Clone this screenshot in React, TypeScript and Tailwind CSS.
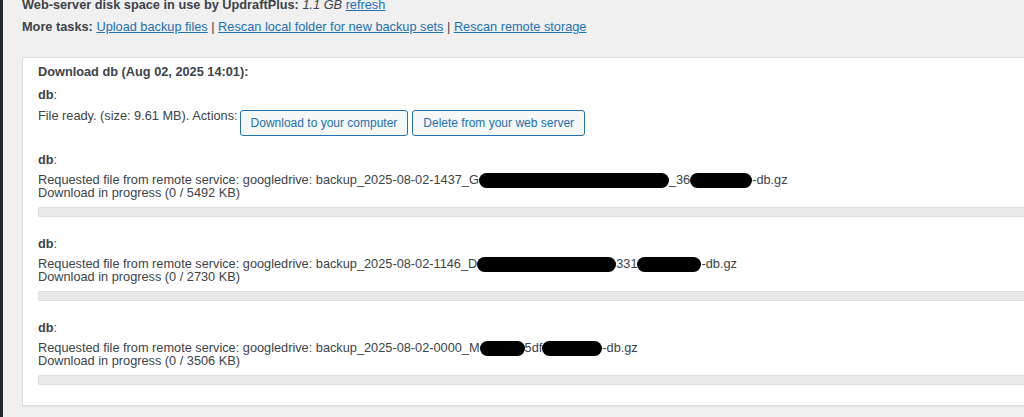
import React from 'react';

// --- Types ---
type Piece = { text?: string; blob?: number };

type RemoteItem = {
    pieces: Piece[];
    size: string;
};

// --- Data ---
const remoteItems: RemoteItem[] = [
    {
        pieces: [
            { text: 'backup_2025-08-02-1437_G' },
            { blob: 190 },
            { text: '_36' },
            { blob: 62 },
            { text: '-db.gz' },
        ],
        size: '5492',
    },
    {
        pieces: [
            { text: 'backup_2025-08-02-1146_D' },
            { blob: 139 },
            { text: '331' },
            { blob: 64 },
            { text: '-db.gz' },
        ],
        size: '2730',
    },
    {
        pieces: [
            { text: 'backup_2025-08-02-0000_M' },
            { blob: 45 },
            { text: '5df' },
            { blob: 60 },
            { text: '-db.gz' },
        ],
        size: '3506',
    },
];

// --- Redaction scribble (negative margins keep it from growing the line box) ---
const Blob: React.FC<{ width: number }> = ({ width }) => (
    <span
        className="inline-block h-[15px] -my-[4px] bg-black rounded-full align-middle"
        style={{ width }}
    />
);

const Link: React.FC<{ children: React.ReactNode }> = ({ children }) => (
    <a href="#" className="text-[#2271b1] underline">
        {children}
    </a>
);

// --- Remote download block ---
const RemoteBlock: React.FC<{ item: RemoteItem; first?: boolean }> = ({ item, first }) => (
    <div className={first ? 'mt-[16px]' : 'mt-[19px]'}>
        <p className="leading-[16px]">
            <strong className="font-bold">db</strong>:
        </p>
        <div className="mt-[6px] leading-[12.5px]">
            Requested file from remote service: googledrive:{' '}
            {item.pieces.map((p, i) =>
                p.blob ? <Blob key={i} width={p.blob} /> : <span key={i}>{p.text}</span>
            )}
            <br />
            Download in progress (0 / {item.size} KB)
        </div>
        <div className="mt-[8px] h-[10px] bg-[#e9e9e9] border border-[#dcdcdc] rounded-[2px]" />
    </div>
);

// --- Main ---
const App: React.FC = () => {
    return (
        <div
            className="flex w-[1024px] h-[417px] bg-[#f0f0f1] text-[#3c434a] text-[12.75px] overflow-hidden"
            style={{ fontFamily: '"Liberation Sans", Arial, sans-serif' }}
        >
            <div className="w-[3px] flex-shrink-0 bg-[#23282d]" />
            <div className="flex-1 pl-[19px] min-w-0">
                <p className="mt-[-3px] leading-[16px] font-bold">
                    Web-server disk space in use by UpdraftPlus:{' '}
                    <span className="font-normal italic">1.1 GB</span>{' '}
                    <span className="font-normal"><Link>refresh</Link></span>
                </p>
                <p className="mt-[6px] leading-[16px]">
                    <strong className="font-bold">More tasks:</strong> <Link>Upload backup files</Link> |{' '}
                    <Link>Rescan local folder for new backup sets</Link> | <Link>Rescan remote storage</Link>
                </p>

                <div className="mt-[22px] w-[1030px] h-[349px] bg-white border border-[#dcdcde] shadow-[0_1px_1px_rgba(0,0,0,0.04)] pl-[15px] pt-[6px]">
                    <p className="font-bold leading-[16px]">Download db (Aug 02, 2025 14:01):</p>
                    <p className="mt-[7px] leading-[16px]">
                        <strong className="font-bold">db</strong>:
                    </p>
                    <div className="mt-[5px] flex items-start">
                        <span className="leading-[16px]">File ready. (size: 9.61 MB). Actions:</span>
                        <button className="ml-[2px] mt-[2px] h-[26px] px-[10px] border border-[#2271b1] bg-[#f6f7f7] text-[#2271b1] rounded-[3px] text-[12px]">
                            Download to your computer
                        </button>
                        <button className="ml-[4px] mt-[2px] h-[26px] px-[10px] border border-[#2271b1] bg-[#f6f7f7] text-[#2271b1] rounded-[3px] text-[12px]">
                            Delete from your web server
                        </button>
                    </div>

                    {remoteItems.map((item, i) => (
                        <RemoteBlock key={i} item={item} first={i === 0} />
                    ))}
                </div>
            </div>
        </div>
    );
};

export default App;
